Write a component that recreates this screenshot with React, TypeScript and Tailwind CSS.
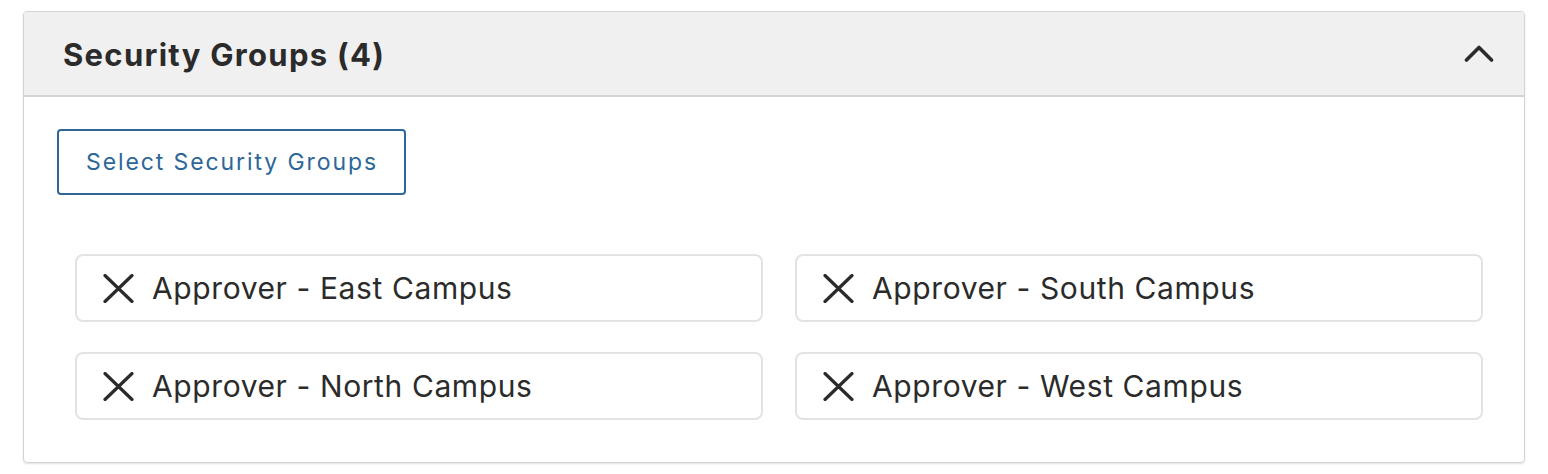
const groups = [
  'Approver - East Campus',
  'Approver - South Campus',
  'Approver - North Campus',
  'Approver - West Campus',
]

function CloseIcon() {
  return (
    <svg width="31" height="29" viewBox="0 0 31 29" className="mr-[18px] shrink-0">
      <path d="M2 1.5 L29 27.5 M29 1.5 L2 27.5" stroke="#2b2b2b" strokeWidth="3.2" strokeLinecap="round" fill="none" />
    </svg>
  )
}

function Chevron() {
  return (
    <svg width="30" height="19" viewBox="0 0 30 19">
      <path d="M2.5 16 L15 3.5 L27.5 16" stroke="#2b2b2b" strokeWidth="3.6" strokeLinecap="round" strokeLinejoin="round" fill="none" />
    </svg>
  )
}

export default function App() {
  return (
    <div className="min-h-screen bg-white pt-[11px] pl-[23px] pr-[23px] font-['Inter',sans-serif] text-[#2b2b2b]">
      <section className="w-[1502px] h-[452px] border border-[#d4d4d4] rounded-[4px] shadow-[0_1px_2px_rgba(0,0,0,0.12)] overflow-hidden">
        {/* Header */}
        <div className="h-[85px] bg-[#f0f0f0] border-b-2 border-[#d4d4d4] flex items-center justify-between pl-[39px] pr-[30px]">
          <h2 className="text-[31px] font-bold tracking-[1.3px] pt-[3px]">Security Groups (4)</h2>
          <Chevron />
        </div>

        {/* Body */}
        <div className="pt-[32px] pl-[33px] pr-[41px]">
          <button className="h-[66px] w-[349px] border-2 border-[#2d6798] rounded-[4px] text-[#2d6798] text-[23px] tracking-[1.9px] pl-[1px]">
            Select Security Groups
          </button>

          <div className="grid grid-cols-2 gap-x-[32px] gap-y-[30px] mt-[59px] pl-[18px]">
            {groups.map((g) => (
              <div
                key={g}
                className="h-[68px] border-2 border-[#e3e3e3] rounded-[8px] flex items-center pl-[26px]"
              >
                <CloseIcon />
                <span className="text-[30px] tracking-[0.6px]">{g}</span>
              </div>
            ))}
          </div>
        </div>
      </section>
    </div>
  )
}
